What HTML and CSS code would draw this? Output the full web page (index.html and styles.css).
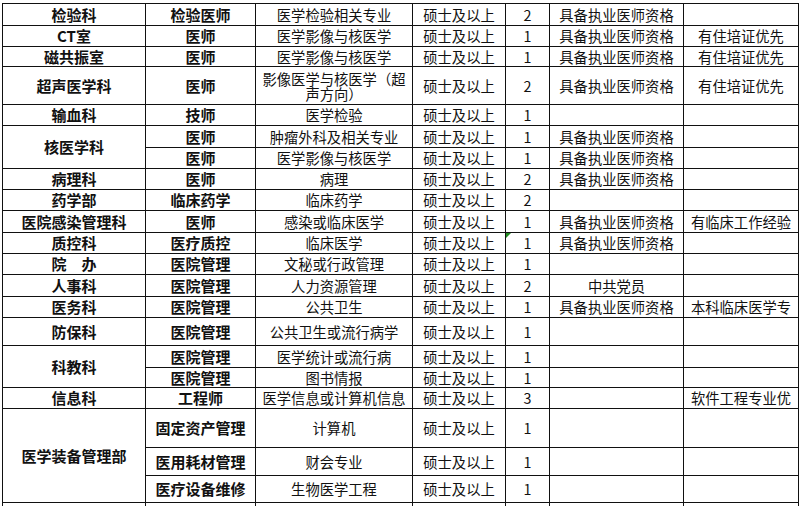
FILE: index.html
```html
<!DOCTYPE html>
<html lang="zh-CN">
<head>
<meta charset="utf-8">
<title>招聘岗位表</title>
<link rel="stylesheet" href="styles.css">
</head>
<body>
<table class="sheet">
  <colgroup>
    <col class="c-dept"><col class="c-post"><col class="c-major"><col class="c-edu"><col class="c-num"><col class="c-req"><col class="c-note">
  </colgroup>
  <tbody>
    <tr class="h22"><td class="b">检验科</td><td class="b">检验医师</td><td>医学检验相关专业</td><td>硕士及以上</td><td>2</td><td>具备执业医师资格</td><td></td></tr>
    <tr class="h21"><td class="b">CT室</td><td class="b">医师</td><td>医学影像与核医学</td><td>硕士及以上</td><td>1</td><td>具备执业医师资格</td><td>有住培证优先</td></tr>
    <tr class="h20"><td class="b">磁共振室</td><td class="b">医师</td><td>医学影像与核医学</td><td>硕士及以上</td><td>1</td><td>具备执业医师资格</td><td>有住培证优先</td></tr>
    <tr class="h38"><td class="b">超声医学科</td><td class="b">医师</td><td class="two"><span class="ln">影像医学与核医学（超</span><span class="ln">声方向）</span></td><td>硕士及以上</td><td>2</td><td>具备执业医师资格</td><td>有住培证优先</td></tr>
    <tr class="h21"><td class="b">输血科</td><td class="b">技师</td><td>医学检验</td><td>硕士及以上</td><td>1</td><td></td><td></td></tr>
    <tr class="h22"><td class="b" rowspan="2">核医学科</td><td class="b">医师</td><td>肿瘤外科及相关专业</td><td>硕士及以上</td><td>1</td><td>具备执业医师资格</td><td></td></tr>
    <tr class="h21"><td class="b">医师</td><td>医学影像与核医学</td><td>硕士及以上</td><td>1</td><td>具备执业医师资格</td><td></td></tr>
    <tr class="h21"><td class="b">病理科</td><td class="b">医师</td><td>病理</td><td>硕士及以上</td><td>2</td><td>具备执业医师资格</td><td></td></tr>
    <tr class="h21"><td class="b">药学部</td><td class="b">临床药学</td><td>临床药学</td><td>硕士及以上</td><td>2</td><td></td><td></td></tr>
    <tr class="h22"><td class="b">医院感染管理科</td><td class="b">医师</td><td>感染或临床医学</td><td>硕士及以上</td><td>1</td><td>具备执业医师资格</td><td>有临床工作经验</td></tr>
    <tr class="h21"><td class="b">质控科</td><td class="b">医疗质控</td><td>临床医学</td><td>硕士及以上</td><td class="flag">1<span class="tri"></span></td><td>具备执业医师资格</td><td></td></tr>
    <tr class="h21"><td class="b">院　办</td><td class="b">医院管理</td><td>文秘或行政管理</td><td>硕士及以上</td><td>1</td><td></td><td></td></tr>
    <tr class="h22"><td class="b">人事科</td><td class="b">医院管理</td><td>人力资源管理</td><td>硕士及以上</td><td>2</td><td>中共党员</td><td></td></tr>
    <tr class="h21"><td class="b">医务科</td><td class="b">医院管理</td><td>公共卫生</td><td>硕士及以上</td><td>1</td><td>具备执业医师资格</td><td><div class="clip">本科临床医学专业</div></td></tr>
    <tr class="h28"><td class="b">防保科</td><td class="b">医院管理</td><td>公共卫生或流行病学</td><td>硕士及以上</td><td>1</td><td></td><td></td></tr>
    <tr class="h22"><td class="b" rowspan="2">科教科</td><td class="b">医院管理</td><td>医学统计或流行病</td><td>硕士及以上</td><td>1</td><td></td><td></td></tr>
    <tr class="h20"><td class="b">医院管理</td><td>图书情报</td><td>硕士及以上</td><td>1</td><td></td><td></td></tr>
    <tr class="h21"><td class="b">信息科</td><td class="b">工程师</td><td>医学信息或计算机信息</td><td>硕士及以上</td><td>3</td><td></td><td><div class="clip">软件工程专业优先</div></td></tr>
    <tr class="h39"><td class="b" rowspan="3">医学装备管理部</td><td class="b">固定资产管理</td><td>计算机</td><td>硕士及以上</td><td>1</td><td></td><td></td></tr>
    <tr class="h28"><td class="b">医用耗材管理</td><td>财会专业</td><td>硕士及以上</td><td>1</td><td></td><td></td></tr>
    <tr class="h27"><td class="b">医疗设备维修</td><td>生物医学工程</td><td>硕士及以上</td><td>1</td><td></td><td></td></tr>
    <tr class="h21"><td></td><td></td><td></td><td></td><td></td><td></td><td></td></tr>
  </tbody>
</table>
</body>
</html>
```

FILE: styles.css
```css
html, body {
  margin: 0;
  padding: 0;
  background: #ffffff;
  overflow: hidden;
}

body {
  width: 800px;
  height: 506px;
  font-family: "Noto Sans CJK SC", "Liberation Sans", sans-serif;
  color: #111111;
}

.sheet {
  margin: 3px 0 0 2px;
  width: 796px;
  border-collapse: collapse;
  table-layout: fixed;
}

.c-dept { width: 143px; }
.c-post { width: 110px; }
.c-major { width: 157px; }
.c-edu { width: 93px; }
.c-num { width: 44px; }
.c-req { width: 134px; }
.c-note { width: 115px; }

.sheet td {
  border: 1px solid #111111;
  padding: 0;
  text-align: center;
  vertical-align: middle;
  font-size: 14.3px;
  line-height: 16px;
  font-weight: 400;
  white-space: nowrap;
  overflow: hidden;
}

.sheet td.b {
  font-size: 15px;
  font-weight: 700;
}

.sheet td.two {
  white-space: normal;
}

.ln {
  display: block;
  height: 15px;
  line-height: 15px;
}

.h20 { height: 20px; }
.h21 { height: 21px; }
.h22 { height: 22px; }
.h27 { height: 27px; }
.h28 { height: 28px; }
.h38 { height: 38px; }
.h39 { height: 39px; }

.clip {
  height: 20px;
  line-height: 20px;
  overflow: hidden;
  white-space: normal;
  word-break: break-all;
}

.flag {
  position: relative;
}

.tri {
  position: absolute;
  left: 0;
  top: 0;
  width: 0;
  height: 0;
  border-top: 5px solid #1f8a1f;
  border-right: 5px solid transparent;
}
```
